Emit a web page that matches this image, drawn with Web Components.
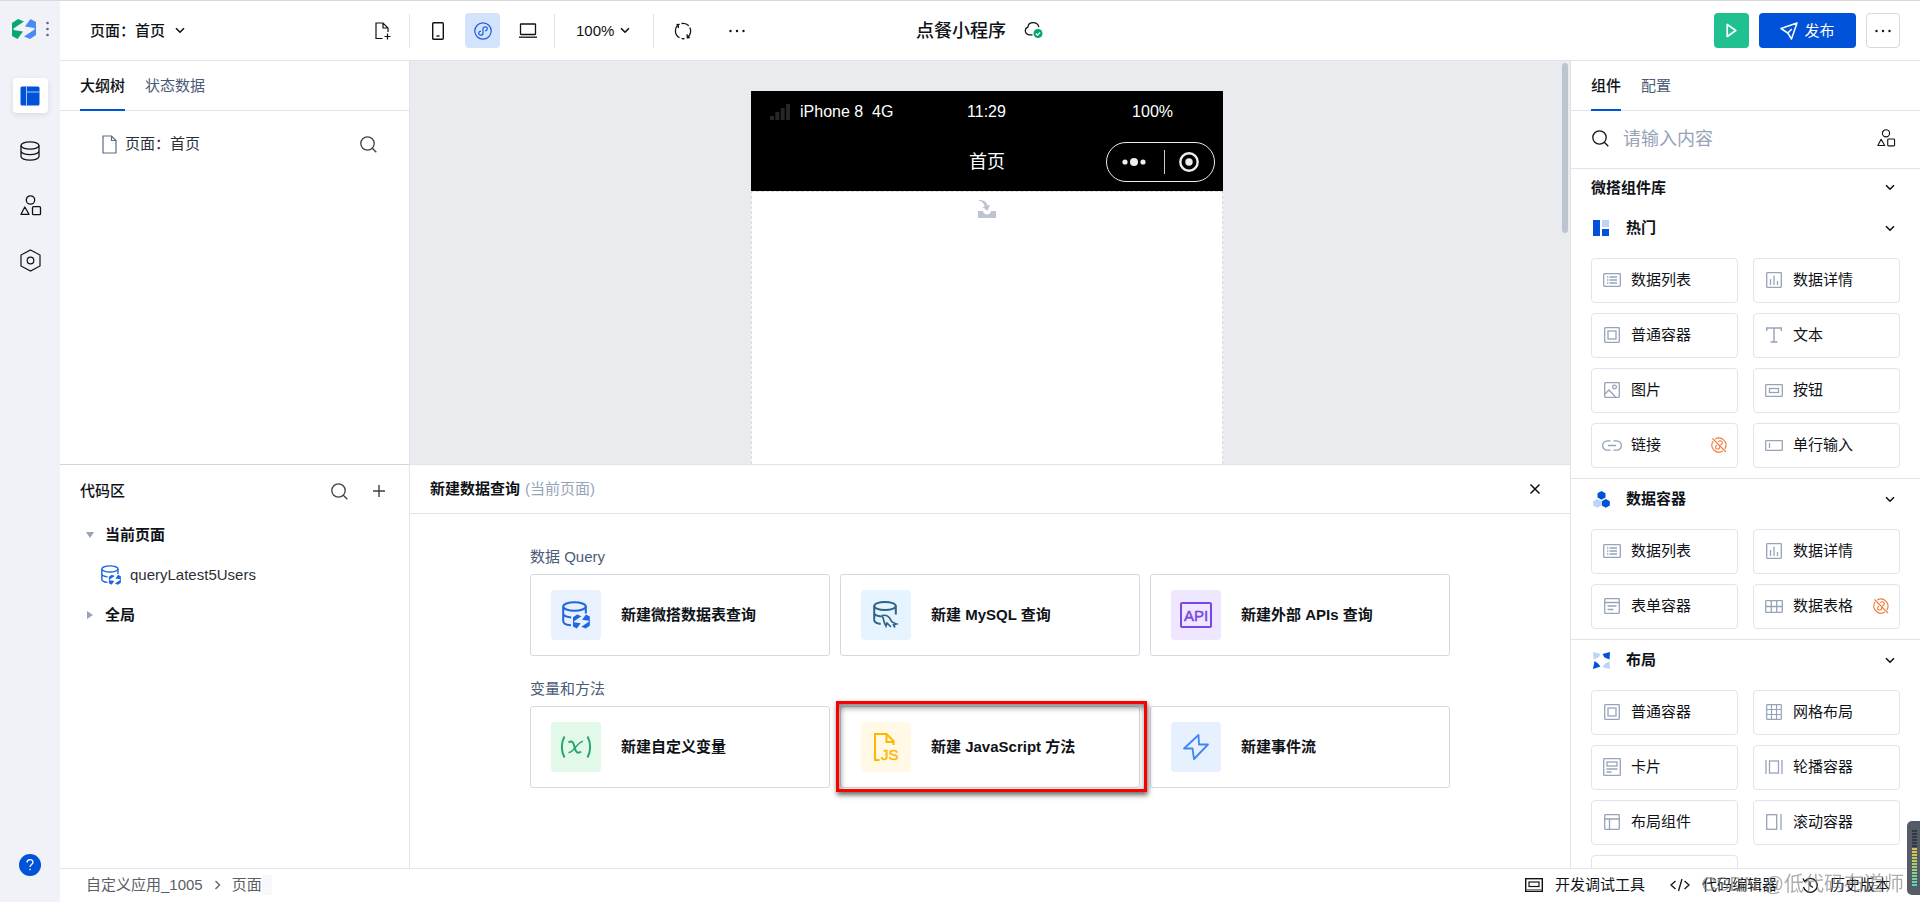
<!DOCTYPE html>
<html lang="zh-CN">
<head>
<meta charset="utf-8">
<title>点餐小程序</title>
<style>
html,body{margin:0;height:100%;overflow:hidden}
body{font:15px/20px "Liberation Sans","Noto Sans CJK SC",sans-serif;color:#0f1318;background:#fff;
--line:#e1e4ea;--blue:#0052d9;--muted:#4b5b76;--soft:#97a3b7;--dock:404px}
</style>
</head>
<body>
<app-shell></app-shell>
<script>
const db='<ellipse cx="10" cy="4.5" rx="9" ry="3.7"/><path d="M1 4.5v11c0 2 4 3.700 9 3.700s9-1.700 9-3.700v-11M1 10c0 2 4 3.700 9 3.700s9-1.700 9-3.700"/>';
const shapes='<circle cx="10.500" cy="5" r="4.200"/><path d="M4.800 12 1 19.300h8z" stroke-linejoin="round"/><rect x="12.500" y="11.700" width="8" height="8" rx="1"/>';
// name: [width, height, stroke width, markup]
const ICONS={
logo:[24,20,0,'<g stroke="none"><path fill="#06a96c" d="M0 4 6 0l6 2.500L1.500 9.500V11l9.500 1.500L5.500 20 0 17z"/><path fill="#4a8af4" d="M24 16 18 20l-6-2.500 10.500-7V9L13 7.500 18.500 0 24 3z"/></g>'],
kebab:[3,16,0,'<g fill="#5d6a80" stroke="none"><circle cx="1.500" cy="2" r="1.300"/><circle cx="1.500" cy="8" r="1.300"/><circle cx="1.500" cy="14" r="1.300"/></g>'],
layout:[20,20,0,'<path stroke="none" fill="#0052d9" d="M2 .5h16A1.500 1.500 0 0 1 19.500 2v16a1.500 1.500 0 0 1-1.500 1.500H2A1.500 1.500 0 0 1 .5 18V2A1.500 1.500 0 0 1 2 .5z"/><path d="M6.500 .5v19M6.500 6h13" stroke="#a8c5f7" stroke-width="1"/>'],
db:[20,20,1.3,db],
shapes:[21,21,1.3,shapes],
hexagon:[21,23,1.2,'<path d="M10.500 1 20 6v11l-9.500 5L1 17V6z"/><circle cx="10.500" cy="11.500" r="3.300"/>'],
help:[22,22,0,'<circle cx="11" cy="11" r="11" fill="#0052d9" stroke="none"/><path d="M8 8.600c0-4 6-4 6-.3 0 2.300-3 2.200-3 4.700M11 14.800v1.500" stroke="#fff" stroke-width="1.300"/>'],
chev:[10,7,1.6,'<path d="m1 1.200 4 4 4-4"/>'],
chevR:[7,10,1.3,'<path d="m1.500 1 4 4-4 4"/>'],
fileplus:[16,18,1.2,'<path d="M7.500 16.500H1V1h7l5 5v4M8 1v5h5M12.500 11.500v6M9.500 14.500h6"/>'],
phone:[12,18,1.4,'<rect x=".7" y=".7" width="10.600" height="16.600" rx="1"/><path d="M4.500 14h3"/>'],
mini:[18,18,1.2,'<circle cx="9" cy="9" r="8.200"/><path d="M7 9.200c-3 .3-3 4 -.3 4 1.500 0 2.300-.8 2.300-2V6.800c0-1.200.8-2 2.300-2 2.700 0 2.700 3.700-.3 4"/>'],
laptop:[18,15,1.3,'<rect x="1.500" y="1" width="15" height="10.500" rx=".5"/><path d="M0 14.200h18"/>'],
refresh:[18,18,1.3,'<path d="M5.500 15.700A7.700 7.700 0 0 1 5.700 2M2.500 2.500 4 2.600l.5 3.500M7.500 1.500a7.700 7.700 0 0 1 7.300 2.300M15.800 5.500a7.700 7.700 0 0 1-2.300 9.800M15.800 15.500l-2.500.3-.2-3.500M10.500 16.600c-1 .2-2 .2-3-.1"/>'],
dots:[16,4,0,'<g fill="currentColor" stroke="none"><circle cx="1.500" cy="2" r="1.200"/><circle cx="8" cy="2" r="1.200"/><circle cx="14.500" cy="2" r="1.200"/></g>'],
cloud:[20,17,1.2,'<path d="M8.500 12.800H4.700a4 4 0 0 1-.8-7.700c.5-5.800 9.500-6 11 0"/><circle cx="14" cy="11.500" r="4.500" fill="#00a870" stroke="none"/><path d="m11.800 11.500 1.600 1.600 2.800-2.800" stroke="#fff"/>'],
play:[11,15,1.7,'<path d="M1.200 1.500v12L9.800 7.500z" stroke-linejoin="round"/>'],
send:[18,18,1.500,'<path d="M1 6.500 17 1l-5.500 16-3.700-6zM7.800 11l4-4" stroke-linejoin="round"/>'],
file:[15,19,1.2,'<path d="M1 1h8.500L14 5.500V18H1zM9.500 1v4.500H14" stroke="#5d6b86"/>'],
search:[17,17,1.3,'<circle cx="7.500" cy="7.500" r="6.700"/><path d="m12.300 12.300 4 4"/>'],
plus:[12,12,1.4,'<path d="M6 0v12M0 6h12"/>'],
close:[10,10,1.5,'<path d="m.5.500 9 9M9.500.500l-9 9"/>'],
down:[8,8,0,'<path d="M0 1h8L4 7z" fill="#97a3b7" stroke="none"/>'],
right:[8,8,0,'<path d="M1 0v8l6-4z" fill="#97a3b7" stroke="none"/>'],
wedadb:[28,28,2,'<g stroke="#1f66e0"><ellipse cx="12.500" cy="5.500" rx="11.300" ry="4.300"/><path d="M1.200 5.500v14.500c0 2.400 3.500 4 7.800 4.300M23.800 5.500v7M1.200 12.500c0 2 3.300 3.500 8 4.100"/></g><path stroke="none" fill="#1f66e0" transform="translate(11 13.500) scale(.7)" d="M0 4 6 0l6 2.500L1.500 9.500V11l9.500 1.500L5.500 20 0 17zM24 16 18 20l-6-2.500 10.500-7V9L13 7.500 18.500 0 24 3z"/>'],
mysql:[26,28,2,'<g stroke="#2f6387"><ellipse cx="12" cy="5" rx="10.800" ry="4"/><path d="M1.200 5v14c0 2 3 3.500 6.500 4M22.800 5v8.500M1.200 12c0 1.900 3 3 7 3.500"/><path stroke-width="1.700" d="M8.500 14.500c5-1 8 1 9.500 5 .7 2 3 2.500 5.500 3.500l-3 1 1.500 2.500M8.500 14.500c3 2.500 1.500 5 3 7.500l1.500 3 1-3 4 4"/></g>'],
api:[32,26,2,'<g stroke="#7a45e6"><rect x="1" y="1" width="30" height="24" rx="1"/></g><text x="16" y="19" text-anchor="middle" font-size="15" font-weight="400" fill="#7a45e6" stroke="#7a45e6" stroke-width=".5" font-family="Liberation Sans">API</text>'],
varx:[32,28,2,'<g stroke="#25a56a"><path d="M4.500 3.500c-3.500 6-3.500 15 0 21M27.500 3.500c3.500 6 3.500 15 0 21M8.500 9.500c3.500-2.700 5 0 6 4.500s3 7.500 6.500 4.500" /><path stroke-width="1.500" d="M23 8.500c-4-1.500-10 12-14.500 11"/></g>'],
js:[24,28,2,'<g stroke="#ffb800"><path d="M5.500 27H1V1h11.500l7 7v4M12.500 1v8h7"/></g><text x="7" y="27" font-size="15" font-weight="400" fill="#ffb800" stroke="#ffb800" stroke-width=".5" font-family="Liberation Sans">JS</text>'],
flow:[26,26,1.8,'<path stroke="#3f86f5" stroke-linejoin="round" d="M15.500 1 1 14.500h8.500L11 25 25 10.500h-9z"/>'],
hot:[16,16,0,'<g stroke="none"><path fill="#0052d9" d="M0 0h7v16H0zM9 9h7v7H9z"/><path fill="#bcd3fb" d="M9 0h7v7H9z"/></g>'],
data:[17,17,0,'<g stroke="none"><path fill="#0052d9" d="M8.500 0l4 2.200v4.300l-4 2.300-4-2.300V2.200zM12.800 8l4 2.200v4.300l-4 2.300-4-2.300v-4.300z"/><path fill="#bcd3fb" d="M4.200 8l4 2.200v4.300l-4 2.300-4-2.300v-4.300z"/></g>'],
grid4:[17,17,0,'<g stroke="none"><path fill="#bcd3fb" d="M0 0 7.500 2 5.500 5.500.5 7.500zM17 17l-7.500-2L12 11.500l4.500-2z"/><path fill="#0052d9" d="M17 0 9.500 2 11.500 5.500l5 2zM0 17l7.500-2.500L5 11.500 1.500 9z"/></g>'],
list:[18,14,1.3,'<rect x=".7" y=".7" width="16.600" height="12.600" rx=".5"/><path d="M4 4h1.300M6.500 4H14M4 7h1.300M6.500 7H14M4 10h1.300M6.500 10H14"/>'],
chart:[16,16,1.3,'<rect x=".7" y=".7" width="14.600" height="14.600" rx=".5"/><path d="M4.500 7v6M8 3.500V13M11.500 9v4"/>'],
box:[16,16,1.3,'<rect x=".7" y=".7" width="14.600" height="14.600" rx=".5"/><rect x="4" y="4" width="8" height="8"/>'],
text:[16,16,1.4,'<path d="M.7 4V1h14.600v3M8 1v14M4.500 15h7"/>'],
image:[16,16,1.3,'<rect x=".7" y=".7" width="14.600" height="14.600" rx=".5"/><circle cx="10.500" cy="5" r="1.900"/><path d="m1 12 4-4 6.500 7"/>'],
button:[18,13,1.3,'<rect x=".7" y=".7" width="16.600" height="11.600" rx=".5"/><rect x="4.500" y="4.500" width="9" height="4"/>'],
link:[20,11,1.3,'<path d="M8.500.8H5.300a4.700 4.700 0 0 0 0 9.400h3.200M11.500.8h3.200a4.700 4.700 0 0 1 0 9.400h-3.200M6 5.500h8"/>'],
input:[18,11,1.3,'<rect x=".7" y=".7" width="16.600" height="9.600" rx=".5"/><path d="M4.500 3v5"/>'],
form:[16,16,1.3,'<rect x=".7" y=".7" width="14.600" height="14.600" rx=".5"/><path d="M1 4.500h14M3.500 8h9M3.500 11.500h6"/>'],
table:[18,13,1.3,'<rect x=".7" y=".7" width="16.600" height="11.600" rx=".5"/><path d="M6.300 1v11M11.700 1v11M1 6.500h16"/>'],
grid:[16,16,1.2,'<rect x=".7" y=".7" width="14.600" height="14.600" rx=".5"/><path d="M5.500 1v14M10.500 1v14M1 5.500h14M1 10.500h14"/>'],
card:[18,18,1.3,'<rect x=".7" y=".7" width="16.600" height="16.600" rx=".5"/><rect x="4" y="4" width="10" height="4"/><path d="M3.500 11h11M3.500 14h5"/>'],
carousel:[18,14,1.3,'<rect x="4.500" y="1" width="9" height="12"/><path d="M1 0v14M17 0v14"/>'],
areas:[16,16,1.3,'<rect x=".7" y=".7" width="14.600" height="14.600" rx=".5"/><path d="M1 5h14M5.500 5v10"/>'],
scroll:[16,16,1.3,'<rect x=".7" y=".7" width="10" height="14.600"/><path d="M15 0v16"/>'],
nolink:[16,16,1.1,'<g stroke="#ee7b3c"><path d="M4 2.100A7.200 7.200 0 0 1 13.900 12M12 14A7.200 7.200 0 0 1 2.100 4M1.500 1.500l13.500 13.500M7.500 4.800c1.500-2 4.500-.6 3.800 1.600-.3.900-1.100 1.200-1.900 1.300M8.500 9.500V11c-.5 1.500-4 1.500-3.900-.8 0-1 .7-1.700 1.600-1.800"/></g>'],
devtool:[18,14,1.4,'<rect x=".7" y=".7" width="16.600" height="12.600"/><rect x="4" y="4" width="10" height="4.500" stroke-width="1.200"/><path d="M1 11.500h16" stroke-width="1" stroke="#888"/>'],
code:[20,12,1.3,'<path d="M5.500 2 1 6l4.500 4M14.500 2 19 6l-4.500 4M12 0 8.500 12"/>'],
history:[16,16,1.3,'<path d="M3 3.800A7 7 0 1 1 1.500 10M1 1.500l1.500 3 3-1.300M8 4.500v4l3 2"/>'],
signal:[20,16,0,'<path fill="#262626" stroke="none" d="M0 12h4v4H0zM5.300 8h4v8h-4zM10.700 4h4v12h-4zM16 0h4v16h-4z"/>'],
capsule:[24,10,0,'<g fill="#eee" stroke="none"><circle cx="3" cy="5" r="2.600"/><circle cx="12" cy="5" r="4"/><circle cx="21" cy="5" r="2.600"/></g>'],
target:[20,20,2.400,'<circle cx="10" cy="10" r="8.700"/><circle cx="10" cy="10" r="3.700" fill="currentColor" stroke="none"/>'],
drop:[18,18,0,'<path fill="#bcc4d0" stroke="none" d="M0 11h5c.5 4.500 7.500 4.500 8 0h5v7H0zM0 0c6-.2 8.800 2 9.500 5.500L12 5 9.500 11 4.500 7l2.300-.5C6 3.500 4 1.300 0 0z"/>'],
};
class UiIcon extends HTMLElement{
  connectedCallback(){
    const [w,h,s,m]=ICONS[this.getAttribute('name')];
    const k=Number(this.getAttribute('scale')||1);
    this.attachShadow({mode:'open'}).innerHTML=`<style>:host{display:inline-flex;flex:none}svg{display:block;overflow:visible}</style><svg width="${Math.round(w*k)}" height="${Math.round(h*k)}" viewBox="0 0 ${w} ${h}" fill="none" stroke="currentColor" stroke-width="${s}" aria-hidden="true">${m}</svg>`;
  }
}
customElements.define('ui-icon',UiIcon);

const BASE=`*{box-sizing:border-box}button,input,select{font:inherit;color:inherit;background:none;border:0;padding:0;margin:0;outline:0}button{display:inline-flex;align-items:center;justify-content:center}a{color:inherit;text-decoration:none}h2,h3,p,ul{margin:0;padding:0;font:inherit}`;
function define(name,css,html){
  const t=document.createElement('template');
  customElements.define(name,class extends HTMLElement{
    connectedCallback(){
      if(this.shadowRoot)return;
      t.innerHTML=`<style>${BASE}${css}</style>${typeof html==='function'?html(this):html}`;
      this.attachShadow({mode:'open'}).append(t.content.cloneNode(true));
    }
  });
}

define('tab-strip',`:host{display:flex;gap:20px;height:50px;padding:0 20px;border-bottom:1px solid var(--line);flex:none;box-sizing:border-box}
button{height:50px;padding-top:2px;color:var(--muted);border-bottom:2px solid transparent}
button.on{color:#0f1318;font-weight:500;border-color:var(--blue)}`,
el=>el.getAttribute('tabs').split(',').map((t,i)=>`<button role="tab" aria-selected="${!i}" class="${i?'':'on'}">${t}</button>`).join(''));

define('side-rail',`:host{display:flex;flex-direction:column;align-items:center;background:#f0f2f7;padding:17px 0 26px}
.brand{display:flex;align-items:center;gap:10px;height:22px;margin:0 0 38px 1px}
nav{display:flex;flex-direction:column;gap:20px}
nav button{width:35px;height:35px;border-radius:4px}
nav button.on{background:#fff;box-shadow:0 2px 6px #00000018}
.help{margin-top:auto}`,
`<div class="brand"><ui-icon name="logo"></ui-icon><ui-icon name="kebab"></ui-icon></div>
<nav><button class="on" aria-label="页面"><ui-icon name="layout"></ui-icon></button><button aria-label="数据"><ui-icon name="db"></ui-icon></button><button aria-label="组件"><ui-icon name="shapes"></ui-icon></button><button aria-label="设置"><ui-icon name="hexagon"></ui-icon></button></nav>
<button class="help" aria-label="帮助"><ui-icon name="help"></ui-icon></button>`);

define('top-bar',`:host{display:grid;grid-template-columns:1fr auto 1fr;align-items:center;height:60px;padding-right:20px;border-bottom:1px solid var(--line);box-sizing:border-box}
.left,.title,.right{display:flex;align-items:center}
.pick{display:flex;align-items:center;gap:9px}
select{appearance:none}
.page{padding-left:30px;width:305px;font-weight:500}
.zoom{gap:5px;padding:0 23px 0 21px}
.sep{width:1px;height:34px;background:var(--line)}
.left button{width:35px;height:35px;border-radius:4px}
.left .devices{display:flex;gap:10px;padding:0 9px 0 10px}
.left button.on{background:#d4e3fc;color:#1d5be0}
.file{margin-right:9px}
.left .sync{margin:0 19px 0 11px}
.title{font-size:18px;line-height:24px;font-weight:500;gap:18px}
.right{justify-content:flex-end;gap:10px}
.right button{height:35px;border-radius:4px}
.run{width:35px;background:#20c090;color:#fff}
.pub{width:97px;gap:6px;background:var(--blue);color:#fff}
.more{width:34px;border:1px solid #d5d9e2}`,
`<div class="left"><label class="pick page"><select aria-label="页面"><option>页面：首页</option></select><ui-icon name="chev"></ui-icon></label>
<button class="file" aria-label="新建页面"><ui-icon name="fileplus"></ui-icon></button><span class="sep"></span>
<div class="devices"><button aria-label="手机"><ui-icon name="phone"></ui-icon></button><button class="on" aria-label="小程序"><ui-icon name="mini"></ui-icon></button><button aria-label="电脑"><ui-icon name="laptop"></ui-icon></button></div><span class="sep"></span>
<label class="pick zoom"><select aria-label="缩放"><option>100%</option></select><ui-icon name="chev"></ui-icon></label><span class="sep"></span>
<button class="sync" aria-label="刷新"><ui-icon name="refresh"></ui-icon></button><button aria-label="更多"><ui-icon name="dots"></ui-icon></button></div>
<div class="title"><span>点餐小程序</span><ui-icon name="cloud"></ui-icon></div>
<div class="right"><button class="run" aria-label="预览"><ui-icon name="play"></ui-icon></button><button class="pub"><ui-icon name="send"></ui-icon>发布</button><button class="more" aria-label="更多操作"><ui-icon name="dots"></ui-icon></button></div>`);

define('outline-panel',`:host{display:flex;flex-direction:column;flex:1;min-height:0}
.row{display:flex;align-items:center;gap:8px;height:30px;margin:18px 32px 0 42px}
.row button{margin-left:auto}span{color:#2b3038}button{color:#3b3f46}`,
`<tab-strip tabs="大纲树,状态数据"></tab-strip><div class="row"><ui-icon name="file"></ui-icon><span>页面：首页</span><button aria-label="搜索"><ui-icon name="search"></ui-icon></button></div>`);

define('code-panel',`:host{display:block;flex:none;height:var(--dock);border-top:1px solid #cfd5de;box-sizing:border-box}
header{display:flex;align-items:center;height:50px;padding:2px 24px 0 20px;font-weight:500}
header button{color:#3b3f46}header button:first-of-type{margin-left:auto;margin-right:25px}
.row{display:flex;align-items:center;height:40px;padding-left:26px;gap:11px;font-weight:700}
.leaf{padding-left:41px;gap:9px;font-weight:400;color:#2b3038}`,
`<header><h2>代码区</h2><button aria-label="搜索"><ui-icon name="search"></ui-icon></button><button aria-label="新建"><ui-icon name="plus"></ui-icon></button></header>
<div class="row"><ui-icon name="down"></ui-icon>当前页面</div>
<div class="row leaf"><ui-icon name="wedadb" scale="0.7"></ui-icon>queryLatest5Users</div>
<div class="row"><ui-icon name="right"></ui-icon>全局</div>`);

define('phone-frame',`:host{display:flex;flex-direction:column;width:472px}
.top{background:#000;color:#fff;height:100px;flex:none;padding:0 8px}
.status,.nav{display:grid;grid-template-columns:1fr auto 1fr;align-items:center}
.status{height:42px;font-size:16px;padding:0 42px 0 11px}
.nav{height:58px;font-size:18px;line-height:24px}
.sig{display:flex;align-items:center;gap:10px;white-space:pre}
.status .time{padding-left:30px}
.right{text-align:right}
.cap{justify-self:end;display:flex;align-items:center;justify-content:space-between;width:109px;height:40px;border:1px solid #eee;border-radius:20px;padding:0 15px;color:#eee}
.cap i{width:1px;height:24px;background:#ccc;margin-left:4px}
.body{flex:1;background:#fff;border:1px dashed #d8dbe0;border-bottom:0;padding-top:8px;text-align:center}`,
`<div class="top"><div class="status"><span class="sig"><ui-icon name="signal"></ui-icon>iPhone 8  4G</span><span class="time">11:29</span><span class="right">100%</span></div>
<div class="nav"><span></span><span>首页</span><div class="cap"><ui-icon name="capsule"></ui-icon><i></i><ui-icon name="target"></ui-icon></div></div></div>
<div class="body"><ui-icon name="drop"></ui-icon></div>`);

define('design-canvas',`:host{display:flex;flex:1;min-height:0;background:#eaebef;padding:30px 2px 0 0;box-sizing:border-box}
.stage{display:flex;flex:1;justify-content:center;padding-left:2px}
.bar{width:6px;height:170px;border-radius:3px;background:#bcc4d0;margin-top:-28px}`,
`<div class="stage"><phone-frame></phone-frame></div><div class="bar"></div>`);

define('query-card',`:host{display:block;flex:1;max-width:300px}
button{width:100%;height:82px;padding:0 20px;border:1px solid #d3d8e1;border-radius:3px;background:#fff;justify-content:flex-start;gap:20px;font-weight:700;position:relative}
.ic{display:flex;align-items:center;justify-content:center;width:50px;height:50px;border-radius:4px;background:var(--tile)}
:host([marked]) button::after{content:"";position:absolute;inset:-6px -8px -5px -5px;border:3px solid #fb0000;box-shadow:1px 3px 5px #0009,inset 1px 3px 6px #0008;z-index:2}`,
el=>`<button><span class="ic" style="--tile:${el.getAttribute('tile')}"><ui-icon name="${el.getAttribute('icon')}"></ui-icon></span><span><slot></slot></span></button>`);

define('query-panel',`:host{display:block;flex:none;height:var(--dock);border-top:1px solid var(--line);box-sizing:border-box}
header{display:flex;align-items:center;gap:5px;height:49px;padding:0 30px 0 20px;border-bottom:1px solid var(--line)}
h2{font-weight:700}header span{color:var(--soft)}header button{margin-left:auto}
section{max-width:920px;margin:0 auto}
h3{color:var(--muted);line-height:20px;padding:0 0 7px}
.a{padding-top:33px}.b{padding-top:23px}
.cards{display:flex;gap:10px}`,
`<header><h2>新建数据查询</h2><span>(当前页面)</span><button aria-label="关闭"><ui-icon name="close"></ui-icon></button></header>
<section class="a"><h3>数据 Query</h3><div class="cards"><query-card icon="wedadb" tile="#e9f1ff">新建微搭数据表查询</query-card><query-card icon="mysql" tile="#e6f4ff">新建 MySQL 查询</query-card><query-card icon="api" tile="#efe7ff">新建外部 APIs 查询</query-card></div></section>
<section class="b"><h3>变量和方法</h3><div class="cards"><query-card icon="varx" tile="#e2f9ea">新建自定义变量</query-card><query-card icon="js" tile="#fff9e6" marked>新建 JavaScript 方法</query-card><query-card icon="flow" tile="#e6f0ff">新建事件流</query-card></div></section>`);

define('palette-item',`:host{display:block}
button{width:100%;height:45px;border:1px solid var(--line);border-radius:4px;background:#fff;justify-content:flex-start;padding:0 10px 1px}
.ic{width:20px;display:flex;justify-content:center;color:var(--soft);margin-right:9px}
.off{margin-left:auto}`,
el=>`<button><span class="ic">${el.hasAttribute('icon')?`<ui-icon name="${el.getAttribute('icon')}"></ui-icon>`:''}</span><slot></slot>${el.hasAttribute('off')?'<ui-icon class="off" name="nolink"></ui-icon>':''}</button>`);

define('palette-section',`:host{display:block;padding:0 20px 10px;border-bottom:1px solid var(--line)}
header{display:flex;align-items:center;height:40px;padding:0 5px 0 2px;margin-bottom:10px;font-weight:700}
h3{margin-left:16px;flex:1}.ic{width:17px;display:flex}
.grid{display:grid;grid-template-columns:1fr 1fr;gap:10px 15px}`,
el=>`<header><span class="ic"><ui-icon name="${el.getAttribute('icon')}"></ui-icon></span><h3>${el.getAttribute('label')}</h3><ui-icon name="chev"></ui-icon></header><div class="grid"><slot></slot></div>`);

define('component-palette',`:host{display:flex;flex-direction:column;border-left:1px solid var(--line);min-height:0}
.find{display:flex;align-items:center;height:58px;flex:none;padding:0 25px 2px 21px;border-bottom:1px solid var(--line);gap:14px}
.find ui-icon:last-child{padding-bottom:2px}
input{flex:1;min-width:0;font-size:18px;line-height:24px;height:24px}input::placeholder{color:var(--soft);opacity:1}
.lib{display:flex;align-items:center;justify-content:space-between;height:39px;flex:none;padding:0 25px 2px 20px;font-weight:700}
.scroll{flex:1;min-height:0;overflow:hidden}`,
`<tab-strip tabs="组件,配置"></tab-strip>
<div class="find"><ui-icon name="search"></ui-icon><input type="text" aria-label="搜索组件" placeholder="请输入内容"><ui-icon name="shapes" scale="0.86"></ui-icon></div>
<div class="lib"><h2>微搭组件库</h2><ui-icon name="chev"></ui-icon></div>
<div class="scroll">
<palette-section icon="hot" label="热门"><palette-item icon="list">数据列表</palette-item><palette-item icon="chart">数据详情</palette-item><palette-item icon="box">普通容器</palette-item><palette-item icon="text">文本</palette-item><palette-item icon="image">图片</palette-item><palette-item icon="button">按钮</palette-item><palette-item icon="link" off>链接</palette-item><palette-item icon="input">单行输入</palette-item></palette-section>
<palette-section icon="data" label="数据容器"><palette-item icon="list">数据列表</palette-item><palette-item icon="chart">数据详情</palette-item><palette-item icon="form">表单容器</palette-item><palette-item icon="table" off>数据表格</palette-item></palette-section>
<palette-section icon="grid4" label="布局"><palette-item icon="box">普通容器</palette-item><palette-item icon="grid">网格布局</palette-item><palette-item icon="card">卡片</palette-item><palette-item icon="carousel">轮播容器</palette-item><palette-item icon="areas">布局组件</palette-item><palette-item icon="scroll">滚动容器</palette-item><palette-item></palette-item></palette-section>
</div>`);

define('status-bar',`:host{display:flex;align-items:center;justify-content:space-between;height:34px;padding:0 30px 1px 26px;border-top:1px solid var(--line);box-sizing:border-box}
nav,div{display:flex;align-items:center}
nav{gap:11px;color:#5a5e66}nav a:last-child{padding-right:10px;background:linear-gradient(#f7f8fa,#f7f8fa) right/10px 100% no-repeat}
div{gap:25px}button{gap:12px}`,
`<nav aria-label="路径"><a href="#app">自定义应用_1005</a><ui-icon name="chevR"></ui-icon><a href="#page">页面</a></nav>
<div><button><ui-icon name="devtool"></ui-icon>开发调试工具</button><button><ui-icon name="code"></ui-icon>代码编辑器</button><button><ui-icon name="history"></ui-icon>历史版本</button></div>`);

define('level-meter',`:host{position:fixed;right:0;bottom:7px;width:13px;height:74px;padding:9px 3px 8px 5px;background:#565b68;border-radius:5px 0 0 5px;box-sizing:border-box}
i{display:block;height:100%;background:repeating-linear-gradient(#565b6800 0 2px,#565b68 2px 3px),linear-gradient(#343845 0 30%,#e0c04c 31%,#b5cf62 55%,#4fd8b0)}`,`<i></i>`);
define('water-mark',`:host{position:fixed;right:16px;bottom:5px;font-size:20px;line-height:26px;color:#77777799;pointer-events:none}`,`<slot></slot>`);

define('app-shell',`:host{display:grid;grid-template-columns:60px minmax(0,1fr);height:100vh;border-top:1px solid #d9d9dc;box-sizing:border-box}
main{display:grid;grid-template-rows:auto minmax(0,1fr) auto;min-height:0}
.work{display:grid;grid-template-columns:350px minmax(0,1fr) 350px;min-height:0}
.left,.center{display:flex;flex-direction:column;min-height:0}
.left{border-right:1px solid var(--line)}`,
`<side-rail></side-rail><main><top-bar></top-bar><div class="work"><div class="left"><outline-panel></outline-panel><code-panel></code-panel></div>
<div class="center"><design-canvas></design-canvas><query-panel></query-panel></div><component-palette></component-palette></div><status-bar></status-bar></main>
<level-meter></level-meter><water-mark>CSDN @低代码布道师</water-mark>`);
</script>
</body>
</html>
